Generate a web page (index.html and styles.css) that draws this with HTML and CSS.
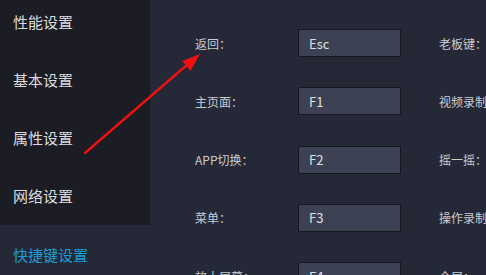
FILE: index.html
```html
<!DOCTYPE html>
<html lang="zh-CN">
<head>
<meta charset="utf-8">
<title>快捷键设置</title>
<link rel="stylesheet" href="styles.css">
</head>
<body>
<div class="app">
  <nav class="sidebar">
    <div class="nav-list">
      <div class="nav-item">性能设置</div>
      <div class="nav-item">基本设置</div>
      <div class="nav-item">属性设置</div>
      <div class="nav-item">网络设置</div>
      <div class="nav-item active">快捷键设置</div>
    </div>
  </nav>
  <main class="content">
    <div class="grid">
      <div class="label">返回：</div>
      <div class="key">Esc</div>
      <div class="label">老板键：</div>

      <div class="label">主页面：</div>
      <div class="key">F1</div>
      <div class="label">视频录制：</div>

      <div class="label">APP切换：</div>
      <div class="key">F2</div>
      <div class="label">摇一摇：</div>

      <div class="label">菜单：</div>
      <div class="key">F3</div>
      <div class="label">操作录制：</div>

      <div class="label">放大屏幕：</div>
      <div class="key">F4</div>
      <div class="label">全屏：</div>
    </div>
  </main>
</div>
<svg class="arrow" width="486" height="275" viewBox="0 0 486 275">
  <line x1="85" y1="153" x2="188" y2="64" stroke="#ee1111" stroke-width="2.4" stroke-linecap="round"/>
  <polygon points="200,54 190.6,70.7 182.2,60.9" fill="#ee1111"/>
</svg>
</body>
</html>
```
FILE: styles.css
```css
html, body {
  margin: 0;
  padding: 0;
  width: 486px;
  height: 275px;
  overflow: hidden;
  background: #252836;
  font-family: "Noto Sans CJK SC", "Noto Sans", sans-serif;
}
.app {
  display: flex;
  width: 486px;
  height: 275px;
  overflow: hidden;
}
.sidebar {
  flex: 0 0 150px;
  width: 150px;
}
.nav-list {
  display: flex;
  flex-direction: column;
  margin-top: -8px;
}
.nav-item {
  height: 58.25px;
  display: flex;
  align-items: center;
  padding-left: 13px;
  font-size: 15px;
  color: #dcdcde;
  background: #1b1c24;
  white-space: nowrap;
}
.nav-item.active {
  background: #252836;
  color: #1d9bd7;
}
.content {
  flex: 1;
  min-width: 0;
  padding: 29px 0 0 45px;
  overflow: hidden;
}
.grid {
  display: grid;
  grid-template-columns: 103px 141px max-content;
  grid-auto-rows: 28px;
  row-gap: 30.25px;
  align-items: center;
}
.label {
  font-size: 12px;
  color: #cbccd1;
  white-space: nowrap;
}
.key {
  box-sizing: border-box;
  width: 103px;
  height: 28px;
  display: flex;
  align-items: center;
  padding-left: 10px;
  background: #3d4154;
  border: 1px solid #17181e;
  font-size: 13px;
  color: #dfe0e4;
}
.arrow {
  position: absolute;
  left: 0;
  top: 0;
  pointer-events: none;
}
```
